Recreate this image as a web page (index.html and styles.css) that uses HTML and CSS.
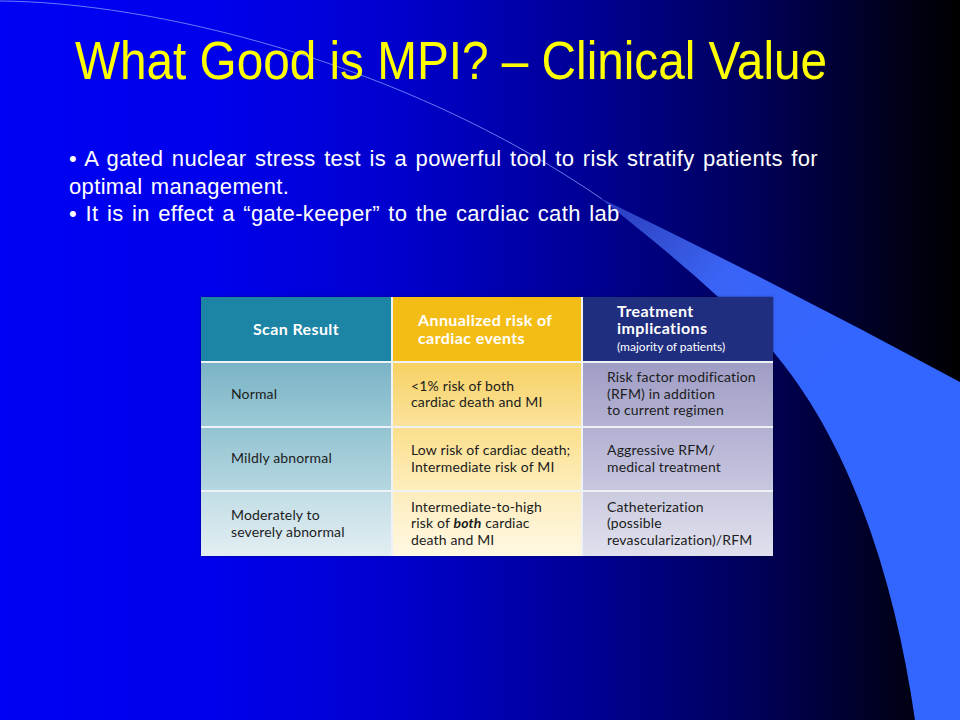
FILE: index.html
```html
<!DOCTYPE html>
<html lang="en">
<head>
<meta charset="utf-8">
<title>What Good is MPI? – Clinical Value</title>
<link rel="stylesheet" href="styles.css">
</head>
<body>
<div class="slide">
  <svg class="bg" width="960" height="720" viewBox="0 0 960 720" xmlns="http://www.w3.org/2000/svg">
    <defs>
      <linearGradient id="wedge" x1="600" y1="200" x2="820" y2="380" gradientUnits="userSpaceOnUse">
        <stop offset="0" stop-color="#4a6ae8" stop-opacity="0.55"/>
        <stop offset="0.5" stop-color="#3a64f6"/>
        <stop offset="1" stop-color="#3366ff"/>
      </linearGradient>
    </defs>
    <path d="M0,1 C150,2 400,60 602,199" fill="none" stroke="#7f98ff" stroke-width="1" stroke-opacity="0.8"/>
    <path d="M600,198 Q780,285 960,382 L960,720 L915,720 C895,580 850,440 770,348 C720,295 660,245 600,198 Z" fill="url(#wedge)"/>
  </svg>

  <div class="content">
    <h1 class="title"><span class="title-text">What Good is MPI? – Clinical Value</span></h1>

    <div class="bullets">
      <p>• A gated nuclear stress test is a powerful tool to risk stratify patients for<br>optimal management.</p>
      <p>• It is in effect a “gate-keeper” to the cardiac cath lab</p>
    </div>

    <div class="risk-table">
      <div class="cell h1 center"><span>Scan Result</span></div>
      <div class="cell h2"><span>Annualized risk of<br>cardiac events</span></div>
      <div class="cell h3"><span>Treatment<br>implications<span class="sub">(majority of patients)</span></span></div>

      <div class="cell c1 r1"><span>Normal</span></div>
      <div class="cell c2 r1"><span>&lt;1% risk of both<br>cardiac death and MI</span></div>
      <div class="cell c3 r1"><span>Risk factor modification<br>(RFM) in addition<br>to current regimen</span></div>

      <div class="cell c1 r2"><span>Mildly abnormal</span></div>
      <div class="cell c2 r2"><span>Low risk of cardiac death;<br>Intermediate risk of MI</span></div>
      <div class="cell c3 r2"><span>Aggressive RFM/<br>medical treatment</span></div>

      <div class="cell c1 r3"><span>Moderately to<br>severely abnormal</span></div>
      <div class="cell c2 r3"><span>Intermediate-to-high<br>risk of <b><i>both</i></b> cardiac<br>death and MI</span></div>
      <div class="cell c3 r3"><span>Catheterization<br>(possible<br>revascularization)/RFM</span></div>
    </div>
  </div>
</div>
</body>
</html>
```

FILE: styles.css
```css
* { box-sizing: border-box; }

html, body {
  margin: 0;
  padding: 0;
  background: #000;
}

.slide {
  position: relative;
  width: 960px;
  height: 720px;
  overflow: hidden;
  background: linear-gradient(to right,
    #0000f4 0%,
    #0000ec 22%,
    #0000cc 42%,
    #000098 60%,
    #00005c 78%,
    #000020 92%,
    #000000 100%);
  font-family: "Liberation Sans", Arial, sans-serif;
}

.bg {
  position: absolute;
  left: 0;
  top: 0;
  z-index: 0;
}

.content {
  position: relative;
  z-index: 1;
}

.title {
  margin: 0;
  padding: 34px 0 0 75px;
  font-weight: normal;
  font-size: 53px;
  line-height: 53px;
  color: #ffff00;
  white-space: nowrap;
}

.title-text {
  display: inline-block;
  transform: scaleX(0.9);
  transform-origin: left center;
}

.bullets {
  margin: 58px 0 0 69px;
  color: #ffffff;
  font-size: 22px;
  line-height: 27.5px;
  letter-spacing: 0.35px;
  word-spacing: 2px;
  white-space: nowrap;
}

.bullets p {
  margin: 0;
}

.risk-table {
  margin: 69px 0 0 201px;
  width: 572px;
  display: grid;
  grid-template-columns: 190px 188px 190px;
  grid-template-rows: 64px 63px 62px 64px;
  gap: 2px;
  background: #eef2f7;
  font-family: Lato, "Open Sans", sans-serif;
  font-size: 14px;
  letter-spacing: 0.15px;
  line-height: 16.5px;
  color: #1c1c1c;
  box-shadow: 0 0 2px rgba(0, 0, 40, 0.6);
}

.cell {
  display: flex;
  flex-direction: column;
  justify-content: center;
}

.center {
  align-items: center;
}

.h1, .h2, .h3 {
  color: #ffffff;
  font-weight: 700;
  font-size: 16px;
  line-height: 17.5px;
  letter-spacing: 0.4px;
}

.h1 { background: #1c84a4; }
.h2 { background: #f4bd16; padding-left: 25px; }
.h3 { background: #1f2e7f; padding-left: 34px; }

.sub {
  display: block;
  font-weight: 400;
  font-size: 12px;
  letter-spacing: 0;
  line-height: 19px;
}

.c1 { padding-left: 30px; }
.c2 { padding-left: 18px; }
.c3 { padding-left: 24px; }

.c1.r1 { background: linear-gradient(#7ab3c5, #9ccad6); }
.c1.r2 { background: linear-gradient(#93c3d1, #b5d7e1); }
.c1.r3 { background: linear-gradient(#c2dde6, #e2eef2); }

.c2.r1 { background: linear-gradient(#f7d163, #fbe39c); }
.c2.r2 { background: linear-gradient(#fbdf8c, #fdeebd); }
.c2.r3 { background: linear-gradient(#fdedbd, #fff8e3); }

.c3.r1 { background: linear-gradient(#9f9dc5, #b4b2d2); }
.c3.r2 { background: linear-gradient(#b3b1d2, #c8c7e0); }
.c3.r3 { background: linear-gradient(#cbcbe0, #e0e0ee); }
```
